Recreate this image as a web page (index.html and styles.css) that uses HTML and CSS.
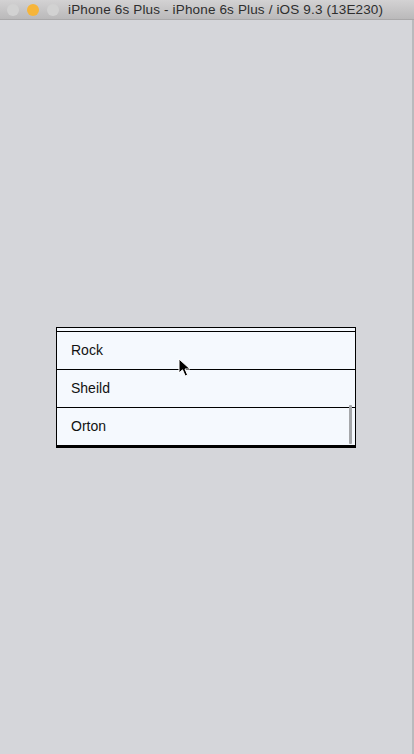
FILE: index.html
```html
<!DOCTYPE html>
<html lang="en">
<head>
    <meta charset="UTF-8">
    <title>iPhone 6s Plus - iPhone 6s Plus / iOS 9.3 (13E230)</title>
    <link rel="stylesheet" href="styles.css">
</head>
<body>
    <div class="titlebar">
        <div class="lights">
            <span class="light"></span>
            <span class="light light-min"></span>
            <span class="light"></span>
        </div>
        <div class="title">iPhone 6s Plus - iPhone 6s Plus / iOS 9.3 (13E230)</div>
    </div>
    <div class="screen">
        <div class="dropdown">
            <div class="stub"></div>
            <div class="row">Rock</div>
            <div class="row">Sheild</div>
            <div class="row">Orton</div>
            <div class="scrollbar"></div>
        </div>
        <svg class="cursor" width="14" height="20" viewBox="0 0 14 20">
            <path d="M1 1 L1 15 L4.5 11.8 L7.2 18 L9.6 17 L7 11 L12 11 Z" fill="#000" stroke="#fff" stroke-width="1"/>
        </svg>
        <div class="edge"></div>
    </div>
</body>
</html>
```

FILE: styles.css
```css
body {
    margin: 0;
    width: 414px;
    height: 754px;
    overflow: hidden;
    background: #d5d6da;
    font-family: "Liberation Sans", Arial, sans-serif;
}

.titlebar {
    height: 19px;
    display: flex;
    align-items: center;
    gap: 9px;
    padding-left: 7px;
    background: linear-gradient(#d3d2d3, #bab9ba);
    border-bottom: 1px solid #a9a8a9;
}

.lights {
    display: flex;
    gap: 8px;
}

.light {
    width: 12px;
    height: 12px;
    border-radius: 50%;
    background: #d2d2d2;
}

.light-min {
    background: #f6b53a;
}

.title {
    font-size: 13.5px;
    color: #2e2e2e;
    white-space: nowrap;
    letter-spacing: 0.15px;
}

.screen {
    position: relative;
    height: 734px;
    padding-top: 307px;
    box-sizing: border-box;
}

.dropdown {
    position: relative;
    width: 298px;
    margin-left: 56px;
    background: #f5f9fe;
    border: 1px solid #000;
    border-bottom-width: 2px;
}

.stub {
    height: 3px;
    border-bottom: 1px solid #000;
}

.row {
    height: 37px;
    line-height: 37px;
    padding-left: 14px;
    font-size: 14px;
    color: #111;
    border-bottom: 1px solid #000;
}

.row:last-of-type {
    border-bottom: none;
}

.scrollbar {
    position: absolute;
    right: 3px;
    bottom: 2px;
    width: 3px;
    height: 39px;
    border-radius: 1px;
    background: #a5a7aa;
}

.cursor {
    position: absolute;
    left: 178px;
    top: 338px;
}

.edge {
    position: absolute;
    right: 0;
    top: 0;
    width: 2px;
    height: 100%;
    background: #b9babd;
}
```
